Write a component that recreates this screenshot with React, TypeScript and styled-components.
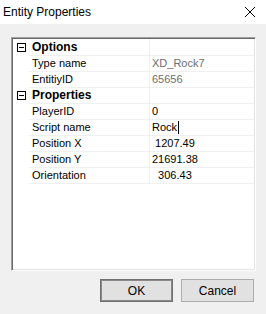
import React from 'react';
import styled, { createGlobalStyle } from 'styled-components';

const GlobalStyle = createGlobalStyle`
  html, body {
    margin: 0;
    padding: 0;
    background: #f0f0f0;
  }
  body {
    font-family: "Liberation Sans", Arial, sans-serif;
  }
`;

const Dialog = styled.div`
  width: 266px;
  height: 314px;
  display: flex;
  flex-direction: column;
  background: #f0f0f0;
`;

const TitleBar = styled.div`
  height: 24px;
  background: #ffffff;
  display: flex;
  align-items: center;
  justify-content: space-between;
  padding-left: 3px;
  padding-right: 10px;
  font-size: 12px;
  color: #000;
`;

const CloseIcon = styled.svg`
  width: 12px;
  height: 12px;
`;

const Body = styled.div`
  flex: 1;
  display: flex;
  flex-direction: column;
  padding: 13px 10px 0 11px;
`;

const Grid = styled.div`
  height: 234px;
  box-sizing: border-box;
  background: #ffffff;
  border-top: 1px solid #a0a0a0;
  border-left: 1px solid #a0a0a0;
  border-right: 1px solid #ffffff;
  border-bottom: 1px solid #ffffff;
  box-shadow: inset 1px 1px 0 #696969, inset -1px -1px 0 #e3e3e3;
  padding: 1px 1px 0 1px;
  font-size: 11px;
`;

const Row = styled.div`
  display: grid;
  grid-template-columns: 16px 121px 1fr;
  height: 16px;
`;

const Gutter = styled.div`
  display: flex;
  align-items: center;
  justify-content: center;
  padding-left: 1px;
`;

const Cell = styled.div<{ $bold?: boolean; $muted?: boolean; $divider?: boolean }>`
  box-sizing: border-box;
  border-bottom: 1px solid #f0f0f0;
  border-right: ${(p) => (p.$divider ? '1px solid #f0f0f0' : 'none')};
  padding-left: ${(p) => (p.$divider ? '3px' : '2px')};
  padding-top: 1px;
  display: flex;
  align-items: center;
  white-space: pre;
  font-weight: ${(p) => (p.$bold ? 'bold' : 'normal')};
  font-size: ${(p) => (p.$bold ? '12px' : '11px')};
  color: ${(p) => (p.$muted ? '#6d6d6d' : '#000000')};
  line-height: 15px;
`;

const Caret = styled.span`
  display: inline-block;
  width: 1px;
  height: 13px;
  background: #000;
  margin-left: 1px;
`;

const Buttons = styled.div`
  display: flex;
  justify-content: flex-end;
  gap: 8px;
  margin-top: 8px;
  padding-right: 2px;
`;

const Button = styled.button<{ $default?: boolean }>`
  width: 73px;
  height: 23px;
  box-sizing: border-box;
  background: #e1e1e1;
  border: 1px solid ${(p) => (p.$default ? '#707070' : '#adadad')};
  box-shadow: ${(p) => (p.$default ? 'inset 0 0 0 1px #8a8a8a' : 'none')};
  font-family: "Liberation Sans", Arial, sans-serif;
  font-size: 12px;
  color: #000;
  padding: 0;
`;

function ExpandBox() {
  return (
    <svg width="9" height="9" viewBox="0 0 9 9">
      <rect x="0.5" y="0.5" width="8" height="8" fill="#fff" stroke="#000" />
      <line x1="2" y1="4.5" x2="7" y2="4.5" stroke="#000" />
    </svg>
  );
}

type Item = { name: string; value?: string; muted?: boolean; caret?: boolean; category?: boolean };

const items: Item[] = [
  { name: 'Options', category: true },
  { name: 'Type name', value: 'XD_Rock7', muted: true },
  { name: 'EntitiyID', value: '65656', muted: true },
  { name: 'Properties', category: true },
  { name: 'PlayerID', value: '0' },
  { name: 'Script name', value: 'Rock', caret: true },
  { name: 'Position X', value: ' 1207.49' },
  { name: 'Position Y', value: '21691.38' },
  { name: 'Orientation', value: '  306.43' },
];

export default function App() {
  return (
    <Dialog>
      <GlobalStyle />
      <TitleBar>
        <span>Entity Properties</span>
        <CloseIcon viewBox="0 0 12 12">
          <path d="M1 1 L11 11 M11 1 L1 11" stroke="#000" strokeWidth="1" />
        </CloseIcon>
      </TitleBar>
      <Body>
        <Grid>
          {items.map((it) => (
            <Row key={it.name}>
              <Gutter>{it.category && <ExpandBox />}</Gutter>
              <Cell $divider $bold={it.category}>
                {it.name}
              </Cell>
              <Cell $muted={it.muted}>
                {it.value}
                {it.caret && <Caret />}
              </Cell>
            </Row>
          ))}
        </Grid>
        <Buttons>
          <Button $default>OK</Button>
          <Button>Cancel</Button>
        </Buttons>
      </Body>
    </Dialog>
  );
}
